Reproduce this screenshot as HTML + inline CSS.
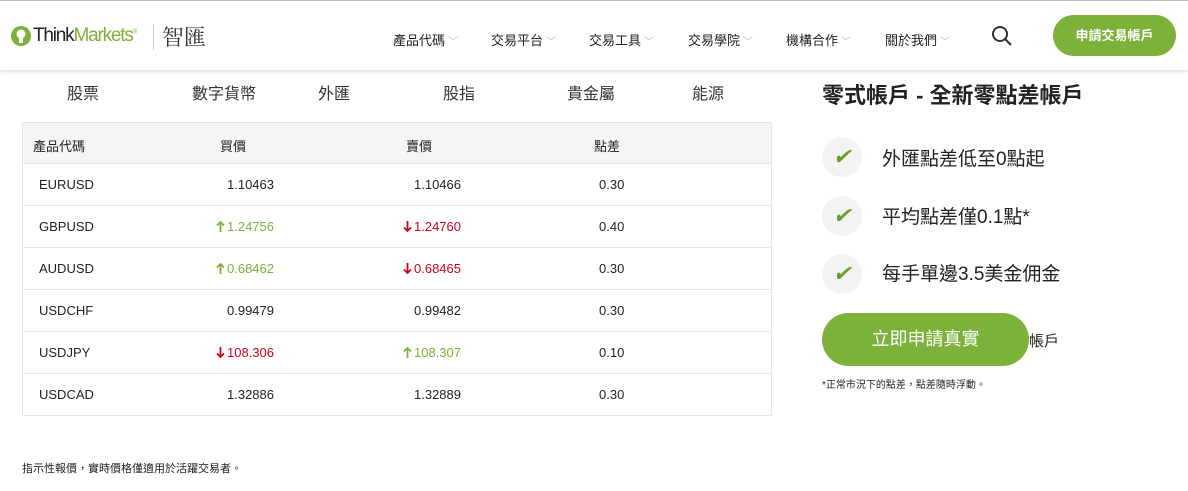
<!DOCTYPE html>
<html><head><meta charset="utf-8"><style>
*{margin:0;padding:0;box-sizing:border-box}
body{width:1188px;height:491px;overflow:hidden;background:#fff;font-family:"Liberation Sans","Noto Sans CJK TC",sans-serif;color:#222;position:relative}
.hdr{position:absolute;left:0;top:0;width:1188px;height:70px;border-top:1px solid #bbb;box-shadow:0 2px 4px rgba(0,0,0,.12);background:#fff}
.abs{position:absolute;white-space:nowrap}
.nav{font-size:13px;color:#222;top:29px}
.nav span{color:#bbb;font-size:10px;margin-left:3px}
.btn{left:1053px;top:14px;width:123px;height:41px;border-radius:21px;background:#7cb13a;color:#fff;font-size:13px;text-align:center;line-height:41px;font-weight:bold}
.tab{top:80px;font-size:16px;color:#333}
.row{position:absolute;left:22px;width:750px;height:42px;border:1px solid #e5e5e5;border-top:none;font-size:13px}
.row div{position:absolute;top:13px;white-space:nowrap}
.c1{left:16px}.c2{right:497px}.c3{right:310px}.c4{left:576px}
.up{color:#7cb13a}.dn{color:#d0021b}
.chk{left:822px;width:40px;height:40px;border-radius:50%;background:#f3f3f3;color:#6a9e2c;font-size:22px;text-align:center;line-height:40px;font-style:italic}
.feat{left:882px;font-size:19px;color:#222}
svg.ar{vertical-align:-1px;margin-right:2px}
</style></head><body>
<div class="hdr">
<svg class="abs" style="left:10px;top:24px" width="22" height="22" viewBox="0 0 22 22"><circle cx="11" cy="11" r="10" fill="#7cb13a"/><circle cx="11" cy="9" r="4.5" fill="#fff"/><rect x="9" y="12" width="4" height="6" fill="#fff"/></svg>
<div class="abs" style="left:33px;top:24px;font-size:19px;letter-spacing:-1.2px"><span style="color:#222">Think</span><span style="color:#7cb13a">Markets</span><sup style="font-size:6px;color:#7cb13a">®</sup></div>
<div class="abs" style="left:153px;top:23px;width:1px;height:26px;background:#ccc"></div>
<div class="abs" style="left:162px;top:20px;font-size:22px;color:#333;font-family:'Noto Serif CJK SC',serif">智匯</div>
<div class="abs nav" style="left:393px">產品代碼<span>﹀</span></div>
<div class="abs nav" style="left:491px">交易平台<span>﹀</span></div>
<div class="abs nav" style="left:589px">交易工具<span>﹀</span></div>
<div class="abs nav" style="left:688px">交易學院<span>﹀</span></div>
<div class="abs nav" style="left:786px">機構合作<span>﹀</span></div>
<div class="abs nav" style="left:885px">關於我們<span>﹀</span></div>
<svg class="abs" style="left:991px;top:24px" width="22" height="22" viewBox="0 0 22 22"><circle cx="9" cy="9" r="7" fill="none" stroke="#333" stroke-width="2"/><line x1="14" y1="14" x2="20" y2="20" stroke="#333" stroke-width="2.2"/></svg>
<div class="abs btn">申請交易帳戶</div>
</div>
<div class="abs tab" style="left:67px">股票</div>
<div class="abs tab" style="left:192px">數字貨幣</div>
<div class="abs tab" style="left:318px">外匯</div>
<div class="abs tab" style="left:443px">股指</div>
<div class="abs tab" style="left:567px">貴金屬</div>
<div class="abs tab" style="left:692px">能源</div>

<div class="row" style="top:122px;background:#f5f5f5;border-top:1px solid #e5e5e5"><div style="left:10px">產品代碼</div><div style="left:197px">買價</div><div style="left:383px">賣價</div><div style="left:571px">點差</div></div>
<div class="row" style="top:164px"><div class="c1">EURUSD</div><div class="c2">1.10463</div><div class="c3">1.10466</div><div class="c4">0.30</div></div>
<div class="row" style="top:206px"><div class="c1">GBPUSD</div><div class="c2 up"><svg class="ar" width="9" height="11" viewBox="0 0 9 11"><path d="M4.5 1V11M1 4.5L4.5 1 8 4.5" stroke="#7cb13a" stroke-width="1.8" fill="none"/></svg>1.24756</div><div class="c3 dn"><svg class="ar" width="9" height="11" viewBox="0 0 9 11"><path d="M4.5 0V10M1 6.5L4.5 10 8 6.5" stroke="#d0021b" stroke-width="1.8" fill="none"/></svg>1.24760</div><div class="c4">0.40</div></div>
<div class="row" style="top:248px"><div class="c1">AUDUSD</div><div class="c2 up"><svg class="ar" width="9" height="11" viewBox="0 0 9 11"><path d="M4.5 1V11M1 4.5L4.5 1 8 4.5" stroke="#7cb13a" stroke-width="1.8" fill="none"/></svg>0.68462</div><div class="c3 dn"><svg class="ar" width="9" height="11" viewBox="0 0 9 11"><path d="M4.5 0V10M1 6.5L4.5 10 8 6.5" stroke="#d0021b" stroke-width="1.8" fill="none"/></svg>0.68465</div><div class="c4">0.30</div></div>
<div class="row" style="top:290px"><div class="c1">USDCHF</div><div class="c2">0.99479</div><div class="c3">0.99482</div><div class="c4">0.30</div></div>
<div class="row" style="top:332px"><div class="c1">USDJPY</div><div class="c2 dn"><svg class="ar" width="9" height="11" viewBox="0 0 9 11"><path d="M4.5 0V10M1 6.5L4.5 10 8 6.5" stroke="#d0021b" stroke-width="1.8" fill="none"/></svg>108.306</div><div class="c3 up"><svg class="ar" width="9" height="11" viewBox="0 0 9 11"><path d="M4.5 1V11M1 4.5L4.5 1 8 4.5" stroke="#7cb13a" stroke-width="1.8" fill="none"/></svg>108.307</div><div class="c4">0.10</div></div>
<div class="row" style="top:374px"><div class="c1">USDCAD</div><div class="c2">1.32886</div><div class="c3">1.32889</div><div class="c4">0.30</div></div>

<div class="abs" style="left:22px;top:460px;font-size:11px">指示性報價，實時價格僅適用於活躍交易者。</div>
<div class="abs" style="left:822px;top:78px;font-size:22px;font-weight:bold">零式帳戶 - 全新零點差帳戶</div>
<div class="abs chk" style="top:137px">✔</div><div class="abs feat" style="top:144px">外匯點差低至0點起</div>
<div class="abs chk" style="top:196px">✔</div><div class="abs feat" style="top:202px">平均點差僅0.1點*</div>
<div class="abs chk" style="top:254px">✔</div><div class="abs feat" style="top:259px">每手單邊3.5美金佣金</div>
<div class="abs" style="left:822px;top:313px;width:207px;height:53px;border-radius:27px;background:#7cb13a;color:#fff;font-size:18px;text-align:center;line-height:53px">立即申請真實</div>
<div class="abs" style="left:1029px;top:330px;font-size:15px">帳戶</div>
<div class="abs" style="left:822px;top:376px;font-size:10px">*正常市況下的點差，點差隨時浮動。</div>
</body></html>
